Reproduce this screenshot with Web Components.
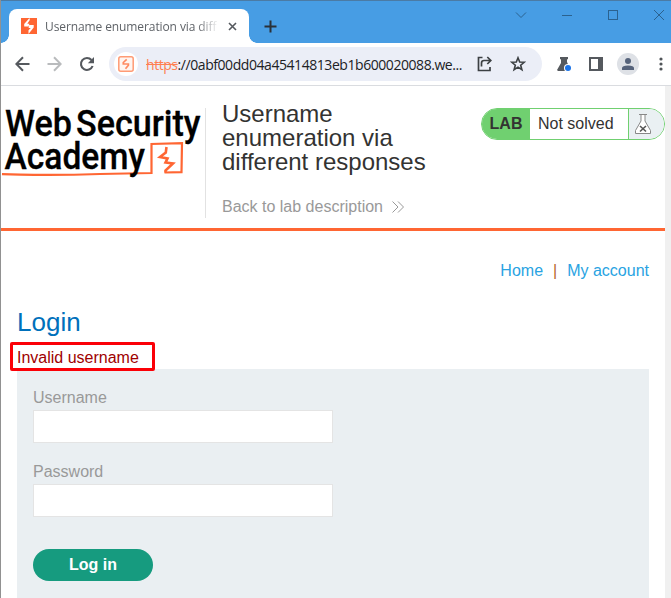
<!DOCTYPE html>
<html lang="en">
<head>
<meta charset="utf-8">
<title>Username enumeration via different responses</title>
<style>
html,body{margin:0;height:100%;overflow:hidden}
body{font-family:"Liberation Sans",Arial,sans-serif;font-size:16px;background:#fff}
</style>
</head>
<body>
<browser-window>
  <tab-strip slot="chrome">Username enumeration via different responses</tab-strip>
  <tool-bar slot="chrome"><span slot="scheme">https</span>://0abf00dd04a45414813eb1b600020088.we...</tool-bar>
  <lab-header>
    <academy-logo slot="logo"></academy-logo>
    <span slot="title">Username<br>enumeration via<br>different responses</span>
    <span slot="back">Back to lab description</span>
    <lab-status slot="status">Not solved</lab-status>
  </lab-header>
  <page-nav><span slot="home">Home</span><span slot="account">My account</span></page-nav>
  <login-section>
    <span slot="heading">Login</span>
    <span slot="error">Invalid username</span>
    <form-field>Username</form-field>
    <form-field>Password</form-field>
    <pill-button>Log in</pill-button>
  </login-section>
</browser-window>
<script>
const define=(name,html)=>customElements.define(name,class extends HTMLElement{
  constructor(){super();this.attachShadow({mode:"open"}).innerHTML=html;}
});

define("browser-window",`<style>
:host{display:flex;flex-direction:column;box-sizing:border-box;width:671px;height:598px;overflow:hidden;border-left:1px solid #919191}
.view{flex:1;display:flex;min-height:0}
main{flex:1;display:flex;flex-direction:column;min-width:0;overflow:hidden}
.bar{width:6px;background:#f0f0f0}
</style><slot name="chrome"></slot><div class="view"><main><slot></slot></main><div class="bar"></div></div>`);

define("tab-strip",`<style>
:host{display:flex;box-sizing:border-box;height:43px;flex:none;background:#479de4;border-top:1px solid #4b7ba5;padding:8px 0 0 8px;font-family:"Open Sans","Noto Sans",sans-serif;font-size:12px}
.tab{position:relative;box-sizing:border-box;width:240px;height:34px;background:#fff;border-radius:8px 8px 0 0;display:flex;align-items:center;padding:0 11px 0 12px}
.tab::before,.tab::after{content:"";position:absolute;bottom:0;width:8px;height:8px}
.tab::before{left:-8px;background:radial-gradient(circle at 0 0,transparent 7.5px,#fff 8px)}
.tab::after{right:-8px;background:radial-gradient(circle at 100% 0,transparent 7.5px,#fff 8px)}
.t{width:172px;margin-left:8px;margin-right:11px;white-space:nowrap;overflow:hidden;color:#5f6368;letter-spacing:-.1px;-webkit-mask-image:linear-gradient(90deg,#000 152px,transparent 174px)}
svg{display:block;flex:none}
.plus{margin:11px 0 0 15px}
.win{margin:0 6px 0 auto}
</style><div class="tab"><svg width="16" height="16" viewBox="0 0 16 16"><rect width="16" height="16" fill="#ff6633"/><path d="M8.5 0L3.2 6V8.6H7.6L8.4 5.7H6.3L8.8 2ZM8.2 7H12.7V9.5L7.5 16V12.2L9.8 10H7.6Z" fill="#fff"/></svg>
<div class="t"><slot></slot></div><svg width="9" height="9" viewBox="0 0 9 9"><path d="M1 1L8 8M8 1L1 8" stroke="#55595e" stroke-width="1.6"/></svg></div>
<svg class="plus" width="13" height="13" viewBox="0 0 13 13"><path d="M6.5 .5V12.5M.5 6.5H12.5" stroke="#2a3138" stroke-width="2"/></svg>
<svg class="win" width="150" height="12" viewBox="0 0 150 12"><g fill="none" stroke="#2b628f"><path d="M1 3.500L6 8.500L11 3.500"/><path d="M47 6.500H57"/><rect x="93.500" y="1.500" width="9" height="9"/><path d="M139 1L149 11M149 1L139 11"/></g></svg>`);

define("tool-bar",`<style>
:host{display:flex;align-items:center;box-sizing:border-box;height:43px;flex:none;background:#fff;border-bottom:1px solid #dadce0;padding-left:14px;font:14px "Open Sans","Noto Sans",sans-serif;color:#202124}
svg{display:block;flex:none}
.omni{display:flex;align-items:center;box-sizing:border-box;width:433px;height:34px;border-radius:17px;background:#ebeef7;margin-left:14px;padding-left:5px}
.site{width:24px;height:24px;border-radius:50%;background:#fff;display:grid;place-items:center}
.url{width:320px;margin-left:8px;white-space:nowrap;letter-spacing:-.44px}
.s{color:#ff7f52;text-decoration:line-through}
.user{width:22px;height:22px;border-radius:50%;background:#dee1e6;margin-left:14px;display:grid;place-items:center}
</style>
<svg width="15" height="16" viewBox="0 0 15 16"><path d="M14.500 8H1.500M8 1.300L1.300 8L8 14.700" fill="none" stroke="#55595e" stroke-width="2"/></svg>
<svg style="margin-left:17px" width="15" height="16" viewBox="0 0 15 16"><path d="M.500 8H13.500M7 1.300L13.700 8L7 14.700" fill="none" stroke="#b9bbbd" stroke-width="2"/></svg>
<svg style="margin-left:17px" width="16" height="16" viewBox="0 0 16 16"><path d="M13.600 10A6 6 0 1 1 12.500 4" fill="none" stroke="#55595e" stroke-width="2.100"/><path d="M15 1V7.200H8.800Z" fill="#55595e"/></svg>
<div class="omni"><div class="site"><svg width="16" height="16" viewBox="0 0 16 16"><rect x=".8" y=".8" width="14.400" height="14.400" rx="2" fill="#fff5f0" stroke="#ff9b75" stroke-width="1.500"/><path d="M8.700 3.300L5.300 6.500V8H10.400V9.300L7.500 12.800" fill="none" stroke="#ff8a60" stroke-width="1.700"/></svg></div>
<div class="url"><span class="s"><slot name="scheme"></slot></span><slot></slot></div>
<svg style="margin-left:11px" width="16" height="16" viewBox="0 0 16 16"><path d="M5.500 1.500H1.500V14.500H13V11M4.500 10.500V7Q4.500 4.500 7 4.500H13M10.300 1L13.800 4.500L10.300 8" fill="none" stroke="#3c4043" stroke-width="1.700"/></svg>
<svg style="margin-left:17px" width="16" height="16" viewBox="0 0 16 16"><path d="M8 1.800L9.700 6L14.200 6.300L10.700 9.200L11.900 13.700L8 11.200L4.100 13.700L5.300 9.200L1.800 6.300L6.300 6Z" fill="none" stroke="#3c4043" stroke-width="1.600"/></svg></div>
<svg style="margin-left:15px" width="15" height="16" viewBox="0 0 15 16"><path d="M3 1H11V3L10 3.500V6L14 15H1L0 14L4 7V3.500L3 3Z" fill="#55595e"/><circle cx="11" cy="12" r="4" fill="#fff"/><circle cx="11" cy="12" r="3" fill="#1a73e8"/></svg>
<svg style="margin-left:17px" width="14" height="14" viewBox="0 0 14 14"><path d="M0 0H14V14H0ZM2 2V12H9V2Z" fill="#55595e" fill-rule="evenodd"/></svg>
<div class="user"><svg width="14" height="14" viewBox="0 0 14 14"><circle cx="7" cy="4" r="3" fill="#56637b"/><path d="M1 13V11Q1 8.500 7 8.500T13 11V13Z" fill="#56637b"/></svg></div>
<svg style="margin-left:20px" width="4" height="14" viewBox="0 0 4 14"><g fill="#505458"><circle cx="2" cy="2" r="1.600"/><circle cx="2" cy="7" r="1.600"/><circle cx="2" cy="12" r="1.600"/></g></svg>`);

define("academy-logo",`<style>:host{display:block}svg{display:block}text{font-family:Roboto,sans-serif;font-weight:500;font-size:37px;fill:#000;stroke:#000;stroke-width:.3px}</style>
<svg width="204" height="90" viewBox="1 100 204 90">
<path d="M2 174.200L20 174.600Q60 175.300 100 174L151.500 173V144L182 143.200L181.500 172.200L164.500 172.500" fill="none" stroke="#ff6633" stroke-width="2.200"/>
<path d="M166.500 147L165.800 152.500L160 157L167.500 158.500L165.500 162.500L173 163.500L165.500 170.500V172.500" fill="none" stroke="#ff6633" stroke-width="2.600"/>
<text x="5" y="136.200" textLength="67" lengthAdjust="spacingAndGlyphs">Web</text>
<text x="76" y="136.200" textLength="124.500" lengthAdjust="spacingAndGlyphs">Security</text>
<text x="4.500" y="169" textLength="140.500" lengthAdjust="spacingAndGlyphs">Academy</text></svg>`);

define("lab-header",`<style>
:host{display:flex;align-items:flex-start;box-sizing:border-box;height:145px;flex:none;border-bottom:3px solid #ff6633}
.logo{padding-top:14px;width:204px}
.mid{margin-top:22px;height:110px;box-sizing:border-box;border-left:1px solid #e2e2e2;padding-left:16px;width:276px}
h2{margin:-6px 0 0;font-size:24px;line-height:24px;font-weight:400;color:#333332}
.back{display:flex;align-items:center;gap:9px;margin-top:23px;color:#999;line-height:20px}
.st{margin-top:22px}
</style><div class="logo"><slot name="logo"></slot></div><div class="mid"><h2><slot name="title"></slot></h2><div class="back"><slot name="back"></slot><svg width="12" height="12"><path d="M.5 .5L6 6L.5 11.500M6 .5L11.500 6L6 11.500" fill="none" stroke="#999"/></svg></div></div><div class="st"><slot name="status"></slot></div>`);

define("lab-status",`<style>
:host{display:flex;align-items:stretch;box-sizing:border-box;width:184px;height:32px;border:1px solid #70d070;border-radius:16px;overflow:hidden;line-height:30px;color:#333332}
b{width:48px;text-align:center;background:#70d070}
.n{width:98px;text-indent:8px;border-right:1px solid #70d070;white-space:nowrap}
.i{flex:1;background:#eaf0f3;padding:5px 0 0 6px}
svg{display:block}
</style><b>LAB</b><div class="n"><slot></slot></div><div class="i"><svg width="16" height="20" viewBox="0 0 16 20"><path d="M4 .5H12M6 .5V7L.5 16.500V19.500H15.500V16.500L10 7V.5" fill="#fff" stroke="#888"/><path d="M5 12L11 17.500M11 12L5 17.500" stroke="#555" stroke-width="1.600"/></svg></div>`);

define("page-nav",`<style>
:host{display:flex;justify-content:flex-end;gap:10px;flex:none;padding:31px 16px 0 0;line-height:18px;color:#29a3e2}
i{font-style:normal;color:#b5672a}
</style><slot name="home"></slot><i>|</i><slot name="account"></slot>`);

define("login-section",`<style>
:host{display:flex;flex-direction:column;flex:1;padding:27px 16px 0}
h1{margin:0;font-size:26px;line-height:30px;font-weight:400;color:#0070bb}
.err{box-sizing:border-box;width:145px;height:29px;margin:5px 0 -2px -7px;border:3px solid #fb0007;border-radius:2px;padding-left:4px;line-height:25px;color:#a00000;background:#fff;z-index:1;white-space:nowrap}
form{flex:1;background:#eaeff2;padding:19px 16px 0;display:flex;flex-direction:column;align-items:flex-start}
</style><h1><slot name="heading"></slot></h1><div class="err"><slot name="error"></slot></div><form><slot></slot></form>`);

define("form-field",`<style>
:host{display:block;padding-bottom:19px;color:#999;line-height:20px}
input{display:block;box-sizing:border-box;width:300px;height:33px;border:1px solid #e4e4e4;background:#fff;margin:2px 0 0;padding:0 8px;outline:none}
</style><div><slot></slot></div><input aria-label="field">`);

define("pill-button",`<style>
:host{display:block;margin-top:13px}
button{display:block;width:120px;height:32px;border:0;border-radius:16px;background:#169b7f;color:#fff;font:bold 16px "Liberation Sans",Arial,sans-serif;padding:0}
</style><button><slot></slot></button>`);
</script>
</body>
</html>
